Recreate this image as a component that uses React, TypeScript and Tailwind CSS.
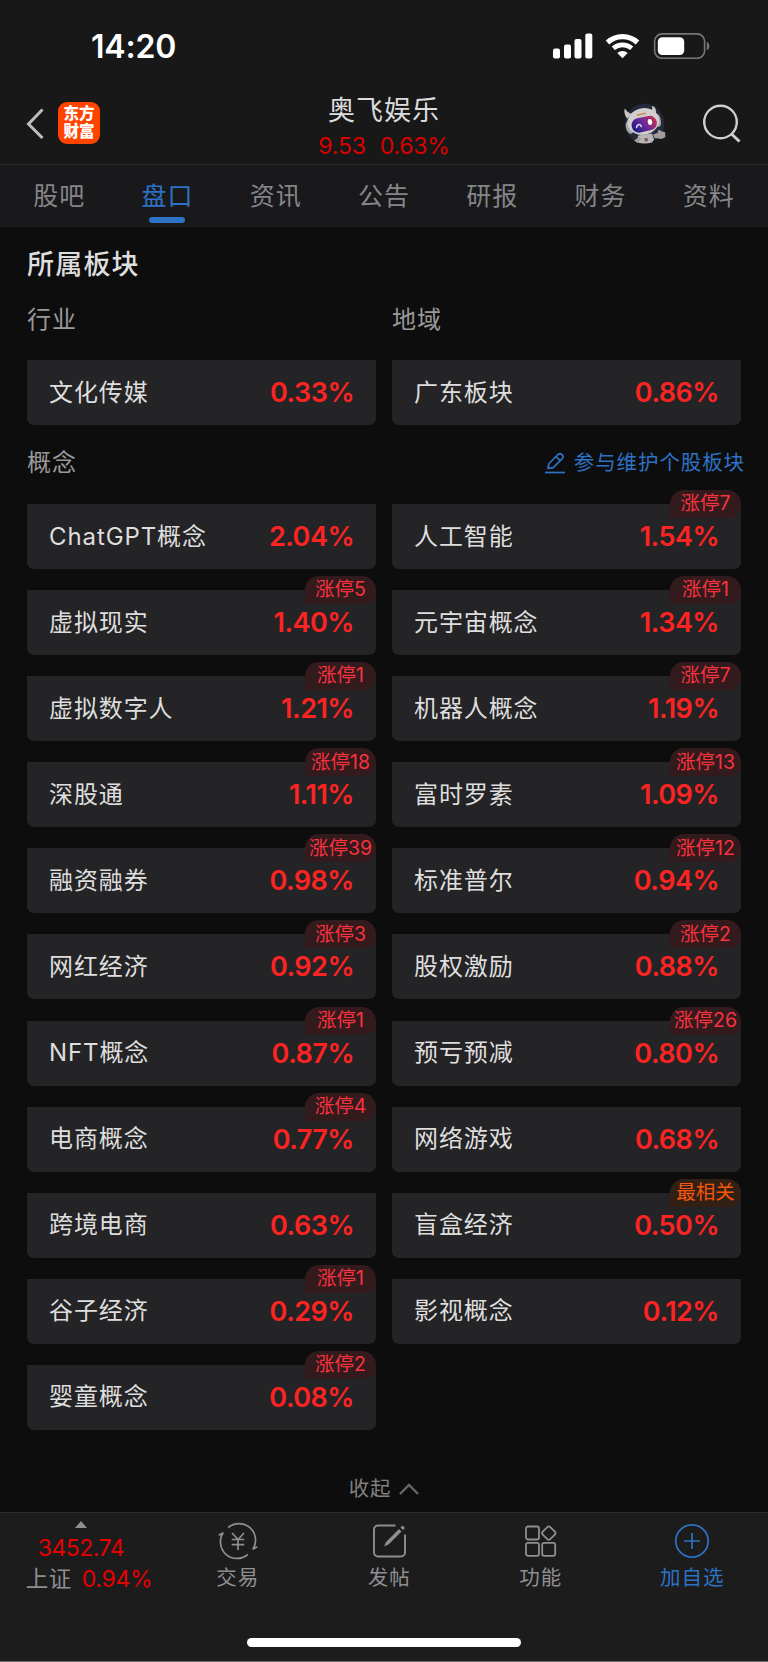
import React from 'react';

interface Board {
  name: string;
  change: string;
  badge?: string;
  hot?: boolean;
}

const TABS = ['股吧', '盘口', '资讯', '公告', '研报', '财务', '资料'];

const CONCEPTS: Board[] = [
  { name: 'ChatGPT概念', change: '2.04%' },
  { name: '人工智能', change: '1.54%', badge: '涨停7' },
  { name: '虚拟现实', change: '1.40%', badge: '涨停5' },
  { name: '元宇宙概念', change: '1.34%', badge: '涨停1' },
  { name: '虚拟数字人', change: '1.21%', badge: '涨停1' },
  { name: '机器人概念', change: '1.19%', badge: '涨停7' },
  { name: '深股通', change: '1.11%', badge: '涨停18' },
  { name: '富时罗素', change: '1.09%', badge: '涨停13' },
  { name: '融资融券', change: '0.98%', badge: '涨停39' },
  { name: '标准普尔', change: '0.94%', badge: '涨停12' },
  { name: '网红经济', change: '0.92%', badge: '涨停3' },
  { name: '股权激励', change: '0.88%', badge: '涨停2' },
  { name: 'NFT概念', change: '0.87%', badge: '涨停1' },
  { name: '预亏预减', change: '0.80%', badge: '涨停26' },
  { name: '电商概念', change: '0.77%', badge: '涨停4' },
  { name: '网络游戏', change: '0.68%' },
  { name: '跨境电商', change: '0.63%' },
  { name: '盲盒经济', change: '0.50%', badge: '最相关', hot: true },
  { name: '谷子经济', change: '0.29%', badge: '涨停1' },
  { name: '影视概念', change: '0.12%' },
  { name: '婴童概念', change: '0.08%', badge: '涨停2' },
];

function StatusBar() {
  return (
    <div className="flex h-[90px] items-center justify-between pl-[91px] pr-[57px] pt-[2px]">
      <span className="pt-[1px] text-[32px] font-semibold leading-none tracking-[-0.200px] text-white">14:20</span>
      <div className="flex items-center">
        <svg width="40" height="26" viewBox="0 0 40 26" fill="#fff">
          <rect x="0" y="15.5" width="7" height="10" rx="2" />
          <rect x="11" y="11.5" width="7" height="14" rx="2" />
          <rect x="21.5" y="6" width="7" height="19.5" rx="2" />
          <rect x="32.3" y="0.5" width="7" height="25" rx="2" />
        </svg>
        <svg className="ml-[12px]" width="36" height="26" viewBox="0 0 36 26" fill="none" stroke="#fff">
          <path d="M2.5 9.5A22 22 0 0 1 32.5 9.5" strokeWidth="5.2" />
          <path d="M8.3 15.3A14 14 0 0 1 26.7 15.3" strokeWidth="4.6" />
          <path d="M17.5 25.2l-5.2-5.3a8 8 0 0 1 10.4 0z" fill="#fff" stroke="none" />
        </svg>
        <svg className="ml-[12px]" width="58" height="26" viewBox="0 0 58 26">
          <rect x="1.6" y="0.9" width="50" height="24.4" rx="7.5" fill="none" stroke="#77777a" strokeWidth="1.6" />
          <rect x="4.8" y="4.2" width="26.4" height="17.8" rx="4.5" fill="#fff" />
          <path d="M53.8 9c3.4 1 3.4 7.200 0 8.200z" fill="#77777a" />
        </svg>
      </div>
    </div>
  );
}

function Robot() {
  return (
    <svg width="44" height="42" viewBox="0 0 44 42">
      <defs>
        <linearGradient id="visor" x1="0" y1="0.6" x2="1" y2="0.3">
          <stop offset="0" stopColor="#1b1c80" />
          <stop offset="0.5" stopColor="#6c2a9c" />
          <stop offset="1" stopColor="#c9304c" />
        </linearGradient>
      </defs>
      <circle cx="21.500" cy="20.500" r="19.800" fill="#222a3c" />
      <path d="M1.500 6.500C2 3.500 3 9.500 8.500 10.500L4.500 15.500C2.500 14 1 10 1.500 6.500z" fill="#c9c5c5" />
      <path d="M28.500 3.200C32.500 2.500 34 8 32.500 12L27 7.500C29.500 7 30 5 28.500 3.200z" fill="#c9c5c5" />
      <ellipse cx="6.500" cy="24.500" rx="3.500" ry="6.500" fill="#a9a5aa" transform="rotate(-16 6.500 24.500)" />
      <ellipse cx="35" cy="17.500" rx="2.800" ry="6.500" fill="#a9a5aa" transform="rotate(-12 35 17.500)" />
      <path d="M15 32.500L29 30.500 31 36.500 29 39.500Q21.500 41.500 14.500 39.500z" fill="#b9b5b6" />
      <path d="M11 37.500l5-3.500 2.500 2-4 4zM30 31.500l4.500-1.500 1-3.500 3.500 2 3 .5.5 5-4 2-7-1z" fill="#a19d9e" />
      <path d="M21 35.500l3.500-.5.500 3-3 .5z" fill="#765c55" />
      <ellipse cx="20.300" cy="18.500" rx="16" ry="13.300" fill="#d3cfcf" transform="rotate(-12 20.300 18.500)" />
      <path d="M13.500 11.500l9-2 .5 1.500-9 2z" fill="#c88c4f" />
      <rect x="8.500" y="14" width="25.500" height="14.500" rx="7" fill="url(#visor)" transform="rotate(-12 21 21)" />
      <path d="M13.500 24.500c.4-3.400 4-4 4.800-1" fill="none" stroke="#ded2ff" strokeWidth="1.600" strokeLinecap="round" />
      <ellipse cx="27" cy="19" rx="2.200" ry="3" fill="#fff" transform="rotate(-10 27 19)" />
    </svg>
  );
}

function Header() {
  return (
    <div className="flex h-[75px] items-start justify-between border-b border-[#2a2a2b] pl-[26px] pr-[26px]">
      <div className="flex w-[260px] items-center pt-[12px]">
        <svg width="18" height="32" viewBox="0 0 18 32" fill="none" stroke="#bdbdbd" strokeWidth="3">
          <path d="M16.500 2.500L2.500 17 16.500 31" />
        </svg>
        <div className="ml-[14px] flex h-[42px] w-[42px] flex-col items-center justify-center rounded-[9px] bg-[#ff4400] text-[15.500px] font-black leading-[18px] text-white">
          <span>东方</span>
          <span>财富</span>
        </div>
      </div>
      <div className="flex flex-col items-center pt-[2px]">
        <span className="h-[38px] text-[27px] leading-[38px] tracking-[1px] text-[#dcdcdc]">奥飞娱乐</span>
        <div className="mt-[2px] flex gap-[14px] text-[23px] leading-[29px] tracking-[-0.200px] text-[#dc0000]">
          <span>9.53</span>
          <span>0.63%</span>
        </div>
      </div>
      <div className="flex w-[260px] items-start justify-end pt-[13px]">
        <Robot />
        <svg className="ml-[35px]" width="40" height="42" viewBox="0 0 40 42" fill="none" stroke="#cfcfcf" strokeWidth="2.400">
          <circle cx="18.500" cy="19" r="16.300" />
          <path d="M29.500 31L37.500 38.500" strokeWidth="3" />
        </svg>
      </div>
    </div>
  );
}

function BoardCard({ item }: { item: Board }) {
  return (
    <div className="relative flex h-[65px] items-center justify-between rounded-b-[7px] bg-[#242426] pl-[22px] pr-[22px]">
      <span className="text-[24px] leading-none tracking-[0.900px] text-[#dedede]">{item.name}</span>
      <span className="text-[27px] font-semibold leading-none tracking-[-0.500px] text-[#fc2323]">{item.change}</span>
      {item.badge && (
        <span
          className={`absolute right-0 top-[-14px] flex h-[28px] w-[71px] items-center justify-center whitespace-nowrap rounded-t-[14px] rounded-br-[12px] text-[19.500px] leading-none ${
            item.hot ? 'bg-[#332014] text-[#f5560a]' : 'bg-[#331a1d] text-[#f8323e]'
          }`}
        >
          {item.badge}
        </span>
      )}
    </div>
  );
}

const NAV = [
  {
    label: '交易',
    icon: (
      <svg width="42" height="38" viewBox="0 0 42 38" fill="none" stroke="#8e8e93" strokeWidth="1.700">
        <path d="M11.200 5.500A16.600 16.600 0 0 1 35.800 27.300L40.200 24.700" />
        <path d="M30.800 32.500A16.600 16.600 0 0 1 6.200 10.700L1.800 13.300" />
        <path d="M15 11l6 6.500 6-6.500M21 17.500V28M14.700 17.500h12.600M14.700 22.700h12.600" />
      </svg>
    ),
  },
  {
    label: '发帖',
    icon: (
      <svg width="42" height="38" viewBox="0 0 42 38" fill="none" stroke="#8e8e93" strokeWidth="1.900">
        <path d="M27.500 3.500H10a4 4 0 0 0-4 4v23a4 4 0 0 0 4 4h23a4 4 0 0 0 4-4V12.500" />
        <path d="M16 24.500l2-4.500L31 7l2.500 2.500-13 13zM32.500 5.500L34.500 3.500 37 6 35 8z" fill="#8e8e93" stroke="none" />
      </svg>
    ),
  },
  {
    label: '功能',
    icon: (
      <svg width="42" height="38" viewBox="0 0 42 38" fill="none" stroke="#8e8e93" strokeWidth="1.800">
        <rect x="6" y="4.500" width="13" height="13" rx="2" />
        <rect x="6" y="20.800" width="13" height="13" rx="2" />
        <rect x="22.200" y="20.800" width="13" height="13" rx="2" />
        <rect x="23.500" y="5.800" width="10.600" height="10.600" rx="2" transform="rotate(45 28.800 11.100)" />
      </svg>
    ),
  },
  {
    label: '加自选',
    active: true,
    icon: (
      <svg width="42" height="38" viewBox="0 0 42 38" fill="none" stroke="#2d72c4" strokeWidth="1.700">
        <circle cx="21" cy="19" r="16.200" />
        <path d="M13 19h16M21 11v16" />
      </svg>
    ),
  },
];

export default function App() {
  return (
    <div className="flex h-[1662px] w-[768px] flex-col overflow-hidden bg-[#0d0d0d] font-['Inter','Noto_Sans_CJK_SC',sans-serif]">
      <div className="bg-[#181818]">
        <StatusBar />
        <Header />
      </div>

      {/* Tabs */}
      <div className="flex h-[62px] border-b border-[#1e1e1f] bg-[#19191b] px-[5px]">
        {TABS.map(tab => {
          const isActive = tab === '盘口';
          return (
            <div
              key={tab}
              className={`flex flex-1 flex-col items-center text-[25px] tracking-[1px] ${
                isActive ? 'text-[#2d72c4]' : 'text-[#85858a]'
              }`}
            >
              <span className="mt-[13px] h-[36px] leading-[36px]">{tab}</span>
              {isActive && <span className="mt-[3px] h-[6px] w-[36px] rounded-[3px] bg-[#2d72c4]" />}
            </div>
          );
        })}
      </div>

      {/* Boards */}
      <div className="flex-1 px-[27px]">
        <h2 className="mt-[20px] h-[36px] text-[27px] font-medium leading-[36px] tracking-[1.200px] text-[#dedede]">所属板块</h2>
        <div className="mt-[19px] grid h-[36px] grid-cols-2 gap-x-[16px] text-[24px] leading-[36px] tracking-[1px] text-[#999]">
          <span>行业</span>
          <span>地域</span>
        </div>
        <div className="mt-[22px] grid grid-cols-2 gap-x-[16px]">
          <BoardCard item={{ name: '文化传媒', change: '0.33%' }} />
          <BoardCard item={{ name: '广东板块', change: '0.86%' }} />
        </div>
        <div className="mt-[20px] flex h-[36px] items-center justify-between">
          <span className="text-[24px] tracking-[1px] text-[#999]">概念</span>
          <div className="mr-[-4px] flex items-center text-[#2d72c4]">
            <svg width="22" height="22" viewBox="0 0 22 22" fill="none" stroke="#2d72c4" strokeWidth="1.700">
              <path d="M1 20.500h20" />
              <path d="M4 16l1-4.500 9-9q2-1.600 4 .2t.2 4l-9 9L4 16.500zM12 4.500l4.200 4.200" strokeLinejoin="round" />
            </svg>
            <span className="ml-[8px] text-[20.500px] tracking-[0.900px]">参与维护个股板块</span>
          </div>
        </div>
        <div className="mt-[23px] grid grid-cols-2 gap-x-[16px] gap-y-[21.100px]">
          {CONCEPTS.map(item => (
            <BoardCard key={item.name} item={item} />
          ))}
        </div>
        <div className="mt-[42px] flex h-[34px] items-center justify-center text-[20.500px] tracking-[0.800px] text-[#808080]">
          收起
          <svg className="ml-[8px]" width="20" height="14" viewBox="0 0 20 14" fill="none" stroke="#666" strokeWidth="2.400">
            <path d="M1 12l9-9 9 9" />
          </svg>
        </div>
      </div>

      {/* Bottom bar */}
      <div className="flex h-[150px] flex-col border-t border-[#2a2a2a] bg-[#1c1c1c]">
        <div className="flex h-[125px]">
          <div className="flex w-[162px] flex-col items-center pt-[8px]">
            <svg width="12" height="7" viewBox="0 0 12 7" fill="#8e8e93">
              <path d="M6 0l6 7H0z" />
            </svg>
            <span className="mt-[6px] text-[23px] leading-[28px] tracking-[-0.500px] text-[#e60000]">3452.74</span>
            <div className="mt-[3px] flex items-center gap-[10px] pl-[16px] text-[23px] leading-[28px]">
              <span className="text-[22.500px] tracking-[0.500px] text-[#8e8e93]">上证</span>
              <span className="tracking-[-0.300px] text-[#e60000]">0.94%</span>
            </div>
          </div>
          {NAV.map(n => (
            <div key={n.label} className="flex w-[151.600px] flex-col items-center pt-[9px]">
              {n.icon}
              <span className={`mt-[2px] text-[20.500px] leading-[32px] tracking-[1px] ${n.active ? 'text-[#2d72c4]' : 'text-[#8e8e93]'}`}>
                {n.label}
              </span>
            </div>
          ))}
        </div>
        <div className="mx-auto h-[9px] w-[274px] rounded-full bg-white" />
        <div className="mt-auto h-px bg-[#6a6a6a]" />
      </div>
    </div>
  );
}
